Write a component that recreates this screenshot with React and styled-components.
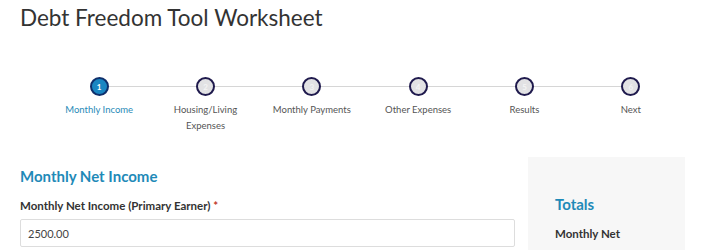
import styled, { createGlobalStyle } from 'styled-components';

const GlobalStyle = createGlobalStyle`
  body {
    margin: 0;
    background: #fff;
    font-family: Lato, "Noto Sans", sans-serif;
    color: #333;
  }
`;

const steps = [
  { n: 1, label: ['Monthly Income'] },
  { n: 2, label: ['Housing/Living', 'Expenses'] },
  { n: 3, label: ['Monthly Payments'] },
  { n: 4, label: ['Other Expenses'] },
  { n: 5, label: ['Results'] },
  { n: 6, label: ['Next'] },
];

const App = () => {
  return (
    <Page>
      <GlobalStyle />
      <Title>Debt Freedom Tool Worksheet</Title>
      <Stepper>
        {steps.map((s) => (
          <Step key={s.n}>
            <Dot $active={s.n === 1}>{s.n}</Dot>
            <StepLabel $active={s.n === 1}>
              {s.label.map((line) => (
                <span key={line}>{line}</span>
              ))}
            </StepLabel>
          </Step>
        ))}
      </Stepper>
      <Main>
        <FormCol>
          <SectionTitle>Monthly Net Income</SectionTitle>
          <FieldLabel>
            Monthly Net Income (Primary Earner) <Req>*</Req>
          </FieldLabel>
          <Input defaultValue="2500.00" />
        </FormCol>
        <Totals>
          <TotalsTitle>Totals</TotalsTitle>
          <TotalsItem>Monthly Net Income</TotalsItem>
        </Totals>
      </Main>
    </Page>
  );
};

export default App;

const Page = styled.div`
  padding: 0 0 0 20px;
  height: 250px;
  overflow: hidden;
`;

const Title = styled.h1`
  margin: 0;
  padding-top: 3px;
  font-size: 22.5px;
  font-weight: 400;
  line-height: 30px;
  color: #333;
`;

const Stepper = styled.div`
  display: grid;
  grid-template-columns: repeat(6, 1fr);
  width: 638px;
  margin: 44px 0 0 26px;
`;

const Step = styled.div`
  position: relative;
  display: flex;
  flex-direction: column;
  align-items: center;

  &:not(:last-child)::after {
    content: '';
    position: absolute;
    top: 9px;
    left: 50%;
    width: 100%;
    height: 1px;
    background: #d6d6d6;
    z-index: 0;
  }
`;

const Dot = styled.span`
  position: relative;
  z-index: 1;
  box-sizing: border-box;
  width: 19px;
  height: 19px;
  border-radius: 50%;
  border: 2.5px solid ${(p) => (p.$active ? '#0f2f6b' : '#1f1a4d')};
  background: ${(p) => (p.$active ? '#1a86c2' : '#e2e2e4')};
  color: ${(p) => (p.$active ? '#fff' : '#f4f4f4')};
  font-size: 8px;
  font-weight: 700;
  display: flex;
  align-items: center;
  justify-content: center;
`;

const StepLabel = styled.span`
  margin-top: 6px;
  display: flex;
  flex-direction: column;
  align-items: center;
  font-size: 9.5px;
  line-height: 16px;
  white-space: nowrap;
  color: ${(p) => (p.$active ? '#2a8bb8' : '#555')};
`;

const Main = styled.div`
  display: grid;
  grid-template-columns: 495px 157px;
  column-gap: 13px;
  margin-top: 23px;
`;

const FormCol = styled.div`
  padding-top: 9px;
`;

const SectionTitle = styled.h2`
  margin: 0;
  font-size: 15px;
  font-weight: 700;
  line-height: 20px;
  color: #1f8ab8;
`;

const FieldLabel = styled.label`
  display: block;
  margin-top: 11px;
  font-size: 11.5px;
  font-weight: 700;
  line-height: 18px;
  color: #333;
`;

const Req = styled.span`
  color: #c0392b;
`;

const Input = styled.input`
  display: block;
  box-sizing: border-box;
  width: 100%;
  height: 28px;
  margin-top: 4px;
  padding: 0 7px;
  border: 1px solid #ddd;
  border-radius: 2px;
  font-family: inherit;
  font-size: 11px;
  color: #444;
  outline: none;
`;

const Totals = styled.aside`
  background: #f7f7f7;
  padding: 37px 10px 0 27px;
  min-height: 120px;
`;

const TotalsTitle = styled.h3`
  margin: 0;
  font-size: 15px;
  font-weight: 700;
  line-height: 20px;
  color: #1f8ab8;
`;

const TotalsItem = styled.div`
  margin-top: 10px;
  width: 80px;
  font-size: 11.5px;
  font-weight: 700;
  line-height: 20px;
  color: #333;
`;
